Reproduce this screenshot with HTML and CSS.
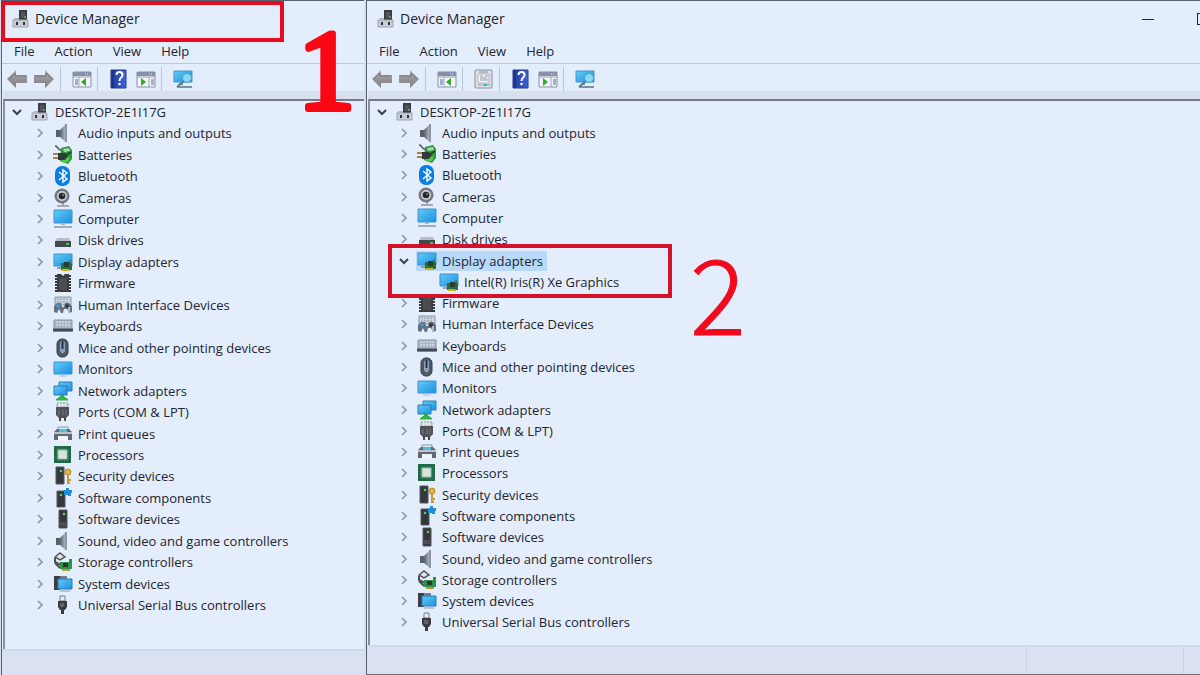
FILE: index.html
```html
<!DOCTYPE html>
<html lang="en">
<head>
<meta charset="utf-8">
<title>Device Manager</title>
<link rel="stylesheet" href="styles.css">
</head>
<body>
<svg class="sprite" aria-hidden="true">
  <defs>
    <linearGradient id="g-screen" x1="0" y1="0" x2="1" y2="1"><stop offset="0" stop-color="#62cbf7"/><stop offset="1" stop-color="#1c90e2"/></linearGradient>
    <linearGradient id="g-arrow" x1="0" y1="0" x2="0" y2="1"><stop offset="0" stop-color="#aaa9ae"/><stop offset="1" stop-color="#7f7e83"/></linearGradient>
    <linearGradient id="g-metal" x1="0" y1="0" x2="1" y2="0"><stop offset="0" stop-color="#59616d"/><stop offset="1" stop-color="#b9c1cc"/></linearGradient>
    <linearGradient id="g-help" x1="0" y1="0" x2="1" y2="0"><stop offset="0" stop-color="#1d3a9c"/><stop offset="1" stop-color="#4263d8"/></linearGradient>
  </defs>
  <symbol id="i-root" viewBox="0 0 20 20"><rect x="8" y="1" width="8" height="10" fill="#3b3d42"/><rect x="10" y="3" width="4" height="6" fill="#53565c"/><rect x="13" y="7" width="2" height="2" fill="#4ea35a"/><path d="M2 11h15v7H2z" fill="#c9cdd6" stroke="#9da3b0"/><path d="M2 11l2-2h4v2z" fill="#b1b5bf"/><path d="M6 13v3M13 13v3" stroke="#2d3036" stroke-width="2"/></symbol>
  <symbol id="i-audio" viewBox="0 0 20 20"><path d="M3 7h4v7H3z" fill="#59616b"/><path d="M7 7l6-6v18l-6-5z" fill="url(#g-metal)"/><path d="M12 1h2v18h-2z" fill="#8c96a4"/></symbol>
  <symbol id="i-battery" viewBox="0 0 20 20"><path d="M2 1c4 0 2 5 7 4" fill="none" stroke="#50565d" stroke-width="1.5"/><path d="M8 3l8-2 3 4v9l-4 5-8-3z" fill="#30963a"/><path d="M10 4l6-1 1 3-6 1z" fill="#a7dcaa"/><path d="M8 14l9-2-2 5-5 1z" fill="#53cc45"/><path d="M5 8h7l3 3-3 4H5z" fill="#34383b"/><path d="M0 9h5M0 13h5" stroke="#a3853b" stroke-width="2"/><path d="M12 11l6-4" stroke="#1b492b" stroke-width="2"/></symbol>
  <symbol id="i-bluetooth" viewBox="0 0 20 20"><rect x="2" y="0" width="15" height="20" rx="7" fill="#087ee4"/><path d="M6 6l8 7-4 3V4l4 3-8 7" fill="none" stroke="#fff" stroke-width="1.4"/></symbol>
  <symbol id="i-camera" viewBox="0 0 20 20"><path d="M4 18h12M10 14v4" stroke="#a3a8b2" stroke-width="2"/><circle cx="9" cy="8" r="7" fill="#777b82" stroke="#6b6f76"/><circle cx="9" cy="8" r="5" fill="#c9ccd3"/><circle cx="9" cy="8" r="3.3" fill="#25272d"/><circle cx="10" cy="7" r="1" fill="#7689a5"/></symbol>
  <symbol id="i-computer" viewBox="0 0 20 20"><path d="M1 1h18v13H1z" fill="url(#g-screen)" stroke="#4294c8"/><path d="M1 18h18" stroke="#a0acbc" stroke-width="2"/><path d="M8 15h4v1H8z" fill="#a8b3c2"/></symbol>
  <symbol id="i-disk" viewBox="0 0 20 20"><path d="M4 8h12l2 4H2z" fill="#b9bcc2"/><path d="M2 11h16v6H2z" fill="#45484c"/><path d="M13 14h3" stroke="#55c55d" stroke-width="2"/></symbol>
  <symbol id="i-display" viewBox="0 0 20 20"><path d="M1 2h18v12H1z" fill="url(#g-screen)" stroke="#3f8fc0"/><path d="M4 16h6" stroke="#8ea0b5" stroke-width="2"/><path d="M8 11h11v7H8z" fill="#1c7739"/><path d="M11 10h5v5h-5z" fill="#283c32"/><path d="M9 18h8" stroke="#d9a91f" stroke-width="2"/><path d="M17 8v10" stroke="#345b32"/></symbol>
  <symbol id="i-firmware" viewBox="0 0 20 20"><path d="M4 1h4l2 2 2-2h4v18H4z" fill="#3a3c40"/><path d="M3 2v17M17 2v17" stroke="#35373b" stroke-width="2" stroke-dasharray="2 1"/><path d="M6 5h8v12H6z" fill="#4b4d51"/></symbol>
  <symbol id="i-hid" viewBox="0 0 20 20"><path d="M2 2h16v8H2z" fill="#c9d2de" stroke="#8c96a6"/><path d="M4 4h12M4 7h12" stroke="#8f9caf" stroke-dasharray="2 1"/><path d="M1 17V11l3-3h4l1 4h2l1-4h4l3 3v6l-3 1-2-4h-3l-1 4H8l-2-4-2 4z" fill="#66717e"/><path d="M5 9v4M3 11h4" stroke="#3a9ee1" stroke-width="1.5"/><circle cx="14" cy="11" r="2" fill="#343a44"/><path d="M16 12v6" stroke="#b0bac7" stroke-width="2"/></symbol>
  <symbol id="i-keyboard" viewBox="0 0 20 20"><path d="M1 4h18v11H1z" fill="#a9b5c4" stroke="#8993a1"/><path d="M3 6h14M3 9h14" stroke="#d3dbe5" stroke-width="1.5" stroke-dasharray="2 1"/><path d="M0 14h20" stroke="#424c59" stroke-width="3"/></symbol>
  <symbol id="i-mouse" viewBox="0 0 20 20"><rect x="4" y="1" width="11" height="18" rx="5" fill="#505965" stroke="#343b45"/><path d="M7 5c1-3 4-3 5 0v8c-1 3-4 3-5 0z" fill="#8ea1b7"/><path d="M9.500 3v8" stroke="#26344a" stroke-width="2"/></symbol>
  <symbol id="i-monitor" viewBox="0 0 20 20"><path d="M1 3h18v12H1z" fill="url(#g-screen)" stroke="#3d94cf"/><path d="M6 17h8" stroke="#b1bccb"/></symbol>
  <symbol id="i-network" viewBox="0 0 20 20"><path d="M6 1h13v9H6z" fill="url(#g-screen)" stroke="#2e80b5"/><path d="M1 5h13v9H1z" fill="url(#g-screen)" stroke="#2b79ae"/><path d="M9 14v3" stroke="#27ae46" stroke-width="4"/><path d="M3 19c3-4 9-4 12 0z" fill="#30ba42" stroke="#35ad43"/></symbol>
  <symbol id="i-port" viewBox="0 0 20 20"><path d="M4 1h11v4H4z" fill="#e0e4eb" stroke="#898e97" stroke-dasharray="2 1"/><path d="M3 5h13v8l-3 3H6l-3-3z" fill="#505258"/><path d="M6 8v5M10 8v5M13 8v5" stroke="#777a82"/><path d="M7 15v4M12 15v4" stroke="#44464b" stroke-width="2"/></symbol>
  <symbol id="i-print" viewBox="0 0 20 20"><path d="M5 3h10v5H5z" fill="#d8eef6" stroke="#8299a9"/><path d="M1 8l3-3h12l3 3v8H1z" fill="#606a74"/><path d="M6 5h8v3H6z" fill="#56bbd3"/><path d="M1 9h18" stroke="#b9c1ca" stroke-width="2"/><path d="M5 12h10v5H5z" fill="#eef5fa"/></symbol>
  <symbol id="i-cpu" viewBox="0 0 20 20"><path d="M1 1h17v17H1z" fill="#26754e"/><path d="M2 2h15v15H2z" fill="none" stroke="#184f34" stroke-dasharray="2 1"/><path d="M5 5h9v9H5z" fill="#d9e4e0" stroke="#9fbcb0"/></symbol>
  <symbol id="i-device" viewBox="0 0 20 20"><path d="M6 1h8v18H6z" fill="#34373c" stroke="#55595f"/><path d="M7 14h6M7 16h6" stroke="#62666c"/><circle cx="11" cy="5" r="1.3" fill="#57cf60"/></symbol>
  <symbol id="i-security" viewBox="0 0 20 20"><path d="M3 1h8v17H3z" fill="#34373c" stroke="#55595f"/><circle cx="8" cy="5" r="1.3" fill="#57cf60"/><circle cx="15" cy="6" r="3" fill="#e3b546" stroke="#b98724"/><path d="M15 9v9M15 14h3M15 17h2" stroke="#c79a37" stroke-width="2"/></symbol>
  <symbol id="i-component" viewBox="0 0 20 20"><path d="M4 3h8v16H4z" fill="#34373c" stroke="#55595f"/><circle cx="8" cy="7" r="1.3" fill="#57cf60"/><path d="M11 2h2V0h3v2h3v3h-1v3h-3v-1h-4z" fill="#218ddd"/></symbol>
  <symbol id="i-storage" viewBox="0 0 20 20"><path d="M2 5l5-4 5 4-5 3z" fill="#e3e6ea" stroke="#52565c" stroke-width="1.5"/><path d="M2 6v4l6 3M2 11l5 5" fill="none" stroke="#4c5057" stroke-width="2"/><path d="M7 10h9V7h3v10H7z" fill="#2c9149"/><path d="M10 11h5v4h-5z" fill="#27362e"/><path d="M9 18h8" stroke="#b79b35" stroke-width="2"/></symbol>
  <symbol id="i-system" viewBox="0 0 20 20"><path d="M1 2h6v14H1z" fill="#394049"/><path d="M7 2h7v3H7z" fill="#727f8e"/><path d="M5 5h14v10H5z" fill="url(#g-screen)" stroke="#2c7db0"/><path d="M7 17h10" stroke="#929ba8"/></symbol>
  <symbol id="i-usb" viewBox="0 0 20 20"><path d="M7 1h5v5H7z" fill="#e7eaf0" stroke="#777b83"/><path d="M5 6h9v6l-2 3H7l-2-3z" fill="#3b3d43"/><path d="M7 8h4v4H7z" fill="#5f6269"/><path d="M9.500 14v5" stroke="#393b40" stroke-width="3"/></symbol>
  <symbol id="i-back" viewBox="0 0 20 20"><path d="M0 10l9-9v5h11v8H9v5z" fill="url(#g-arrow)"/><path d="M2 10l6-6v3h11" fill="none" stroke="#77777d"/></symbol>
  <symbol id="i-forward" viewBox="0 0 20 20"><path d="M20 10l-9-9v5H0v8h11v5z" fill="url(#g-arrow)"/><path d="M18 10l-6-6v3H1" fill="none" stroke="#77777d"/></symbol>
  <symbol id="i-tree" viewBox="0 0 20 20"><path d="M1 3h18v15H1z" fill="#f2f4f8" stroke="#8a93a6"/><path d="M1 3h18v4H1z" fill="#8591aa"/><path d="M13 5h4" stroke="#dce2ed" stroke-dasharray="1 1"/><path d="M1 8h18M7 8v10" stroke="#9da5b5"/><path d="M3 11h3M3 13h3M3 15h3" stroke="#4b6aa4"/><path d="M14 9v8l-5-4z" fill="#35a62f"/></symbol>
  <symbol id="i-pane" viewBox="0 0 20 20"><path d="M1 3h18v15H1z" fill="#f2f4f8" stroke="#8a93a6"/><path d="M1 3h18v4H1z" fill="#8591aa"/><path d="M13 5h4" stroke="#dce2ed" stroke-dasharray="1 1"/><path d="M1 8h18M13 8v10" stroke="#9da5b5"/><path d="M15 11h3M15 13h3M15 15h3" stroke="#4b6aa4"/><path d="M5 9v8l5-4z" fill="#35a62f"/></symbol>
  <symbol id="i-props" viewBox="0 0 20 20"><rect x="1" y="1" width="17" height="18" rx="1" fill="#dfe3e9" stroke="#868d99"/><path d="M4 5h11v9H4z" fill="#f7f8fa" stroke="#a9afba"/><path d="M5 3h9M6 7h3M11 7h3M6 9h7M6 11h8" stroke="#8b929e"/><path d="M4 16h4M13 16h3" stroke="#9199a6"/><path d="M9 16h4" stroke="#38b5ca" stroke-width="2"/></symbol>
  <symbol id="i-help" viewBox="0 0 20 20"><path d="M2 1h15v18H2z" fill="url(#g-help)" stroke="#243b91"/><path d="M4 1v18" stroke="#182b78"/><path d="M7.500 6c0-4 6-4 6 0 0 3-3 2-3 6" fill="none" stroke="#fff" stroke-width="2"/><circle cx="10.500" cy="15" r="1.300" fill="#fff"/></symbol>
  <symbol id="i-scan" viewBox="0 0 20 20"><path d="M1 2h18v11H1z" fill="url(#g-screen)" stroke="#4295c5"/><path d="M4 18h15M6 15h4" stroke="#7793a5" stroke-width="2"/><path d="M11 12l-7 6" stroke="#597e91" stroke-width="2"/><circle cx="14" cy="9" r="4.500" fill="#87d8f5" stroke="#4e9fc5"/></symbol>
  <symbol id="i-right" viewBox="0 0 20 20"><path d="M8 6l4 4-4 4" fill="none" stroke="#93999f" stroke-width="1.700"/></symbol>
  <symbol id="i-down" viewBox="0 0 20 20"><path d="M6 8l4 4 4-4" fill="none" stroke="#3c4048" stroke-width="2"/></symbol>
</svg>

<main class="desktop">
  <section class="window window-first" aria-label="Device Manager, collapsed">
    <header class="titlebar">
      <svg class="app-icon"><use href="#i-root"/></svg><h1 class="title">Device Manager</h1>
      <span class="frame frame-title"></span>
    </header>
    <nav class="menubar"><button>File</button><button>Action</button><button>View</button><button>Help</button></nav>
    <div class="toolbar">
      <button aria-label="Back"><svg><use href="#i-back"/></svg></button><button aria-label="Forward"><svg><use href="#i-forward"/></svg></button><i class="sep"></i>
      <button aria-label="Console tree"><svg><use href="#i-tree"/></svg></button><i class="sep"></i>
      <button aria-label="Help topics"><svg><use href="#i-help"/></svg></button><button aria-label="Action pane"><svg><use href="#i-pane"/></svg></button><i class="sep"></i>
      <button aria-label="Scan for hardware changes"><svg><use href="#i-scan"/></svg></button>
    </div>
    <div class="pane">
      <ul class="tree">
        <li class="root"><button aria-label="Collapse"><svg><use href="#i-down"/></svg></button><span class="node"><svg><use href="#i-root"/></svg>DESKTOP-2E1I17G</span></li>
        <li><button aria-label="Expand"><svg><use href="#i-right"/></svg></button><span class="node"><svg><use href="#i-audio"/></svg>Audio inputs and outputs</span></li>
        <li><button aria-label="Expand"><svg><use href="#i-right"/></svg></button><span class="node"><svg><use href="#i-battery"/></svg>Batteries</span></li>
        <li><button aria-label="Expand"><svg><use href="#i-right"/></svg></button><span class="node"><svg><use href="#i-bluetooth"/></svg>Bluetooth</span></li>
        <li><button aria-label="Expand"><svg><use href="#i-right"/></svg></button><span class="node"><svg><use href="#i-camera"/></svg>Cameras</span></li>
        <li><button aria-label="Expand"><svg><use href="#i-right"/></svg></button><span class="node"><svg><use href="#i-computer"/></svg>Computer</span></li>
        <li><button aria-label="Expand"><svg><use href="#i-right"/></svg></button><span class="node"><svg><use href="#i-disk"/></svg>Disk drives</span></li>
        <li><button aria-label="Expand"><svg><use href="#i-right"/></svg></button><span class="node"><svg><use href="#i-display"/></svg>Display adapters</span></li>
        <li><button aria-label="Expand"><svg><use href="#i-right"/></svg></button><span class="node"><svg><use href="#i-firmware"/></svg>Firmware</span></li>
        <li><button aria-label="Expand"><svg><use href="#i-right"/></svg></button><span class="node"><svg><use href="#i-hid"/></svg>Human Interface Devices</span></li>
        <li><button aria-label="Expand"><svg><use href="#i-right"/></svg></button><span class="node"><svg><use href="#i-keyboard"/></svg>Keyboards</span></li>
        <li><button aria-label="Expand"><svg><use href="#i-right"/></svg></button><span class="node"><svg><use href="#i-mouse"/></svg>Mice and other pointing devices</span></li>
        <li><button aria-label="Expand"><svg><use href="#i-right"/></svg></button><span class="node"><svg><use href="#i-monitor"/></svg>Monitors</span></li>
        <li><button aria-label="Expand"><svg><use href="#i-right"/></svg></button><span class="node"><svg><use href="#i-network"/></svg>Network adapters</span></li>
        <li><button aria-label="Expand"><svg><use href="#i-right"/></svg></button><span class="node"><svg><use href="#i-port"/></svg>Ports (COM &amp; LPT)</span></li>
        <li><button aria-label="Expand"><svg><use href="#i-right"/></svg></button><span class="node"><svg><use href="#i-print"/></svg>Print queues</span></li>
        <li><button aria-label="Expand"><svg><use href="#i-right"/></svg></button><span class="node"><svg><use href="#i-cpu"/></svg>Processors</span></li>
        <li><button aria-label="Expand"><svg><use href="#i-right"/></svg></button><span class="node"><svg><use href="#i-security"/></svg>Security devices</span></li>
        <li><button aria-label="Expand"><svg><use href="#i-right"/></svg></button><span class="node"><svg><use href="#i-component"/></svg>Software components</span></li>
        <li><button aria-label="Expand"><svg><use href="#i-right"/></svg></button><span class="node"><svg><use href="#i-device"/></svg>Software devices</span></li>
        <li><button aria-label="Expand"><svg><use href="#i-right"/></svg></button><span class="node"><svg><use href="#i-audio"/></svg>Sound, video and game controllers</span></li>
        <li><button aria-label="Expand"><svg><use href="#i-right"/></svg></button><span class="node"><svg><use href="#i-storage"/></svg>Storage controllers</span></li>
        <li><button aria-label="Expand"><svg><use href="#i-right"/></svg></button><span class="node"><svg><use href="#i-system"/></svg>System devices</span></li>
        <li><button aria-label="Expand"><svg><use href="#i-right"/></svg></button><span class="node"><svg><use href="#i-usb"/></svg>Universal Serial Bus controllers</span></li>
      </ul>
    </div>
    <footer class="statusbar"></footer>
    <svg class="step step-one" viewBox="0 0 60 100"><text x="0" y="82">1</text></svg>
  </section>

  <section class="window window-second" aria-label="Device Manager, display adapters expanded">
    <header class="titlebar">
      <svg class="app-icon"><use href="#i-root"/></svg><h2 class="title">Device Manager</h2>
      <button class="caption minimize" aria-label="Minimize"></button><button class="caption maximize" aria-label="Maximize"></button>
    </header>
    <nav class="menubar"><button>File</button><button>Action</button><button>View</button><button>Help</button></nav>
    <div class="toolbar">
      <button aria-label="Back"><svg><use href="#i-back"/></svg></button><button aria-label="Forward"><svg><use href="#i-forward"/></svg></button><i class="sep"></i>
      <button aria-label="Console tree"><svg><use href="#i-tree"/></svg></button><i class="sep"></i>
      <button aria-label="Properties"><svg><use href="#i-props"/></svg></button><i class="sep"></i>
      <button aria-label="Help topics"><svg><use href="#i-help"/></svg></button><button aria-label="Action pane"><svg><use href="#i-pane"/></svg></button><i class="sep"></i>
      <button aria-label="Scan for hardware changes"><svg><use href="#i-scan"/></svg></button>
    </div>
    <div class="pane">
      <ul class="tree">
        <li class="root"><button aria-label="Collapse"><svg><use href="#i-down"/></svg></button><span class="node"><svg><use href="#i-root"/></svg>DESKTOP-2E1I17G</span></li>
        <li><button aria-label="Expand"><svg><use href="#i-right"/></svg></button><span class="node"><svg><use href="#i-audio"/></svg>Audio inputs and outputs</span></li>
        <li><button aria-label="Expand"><svg><use href="#i-right"/></svg></button><span class="node"><svg><use href="#i-battery"/></svg>Batteries</span></li>
        <li><button aria-label="Expand"><svg><use href="#i-right"/></svg></button><span class="node"><svg><use href="#i-bluetooth"/></svg>Bluetooth</span></li>
        <li><button aria-label="Expand"><svg><use href="#i-right"/></svg></button><span class="node"><svg><use href="#i-camera"/></svg>Cameras</span></li>
        <li><button aria-label="Expand"><svg><use href="#i-right"/></svg></button><span class="node"><svg><use href="#i-computer"/></svg>Computer</span></li>
        <li><button aria-label="Expand"><svg><use href="#i-right"/></svg></button><span class="node"><svg><use href="#i-disk"/></svg>Disk drives</span></li>
        <li class="marked"><button aria-label="Collapse"><svg><use href="#i-down"/></svg></button><span class="node selected"><svg><use href="#i-display"/></svg>Display adapters</span><span class="frame frame-node"></span><span class="step step-two">2</span></li>
        <li class="leaf"><span class="node"><svg><use href="#i-display"/></svg>Intel(R) Iris(R) Xe Graphics</span></li>
        <li><button aria-label="Expand"><svg><use href="#i-right"/></svg></button><span class="node"><svg><use href="#i-firmware"/></svg>Firmware</span></li>
        <li><button aria-label="Expand"><svg><use href="#i-right"/></svg></button><span class="node"><svg><use href="#i-hid"/></svg>Human Interface Devices</span></li>
        <li><button aria-label="Expand"><svg><use href="#i-right"/></svg></button><span class="node"><svg><use href="#i-keyboard"/></svg>Keyboards</span></li>
        <li><button aria-label="Expand"><svg><use href="#i-right"/></svg></button><span class="node"><svg><use href="#i-mouse"/></svg>Mice and other pointing devices</span></li>
        <li><button aria-label="Expand"><svg><use href="#i-right"/></svg></button><span class="node"><svg><use href="#i-monitor"/></svg>Monitors</span></li>
        <li><button aria-label="Expand"><svg><use href="#i-right"/></svg></button><span class="node"><svg><use href="#i-network"/></svg>Network adapters</span></li>
        <li><button aria-label="Expand"><svg><use href="#i-right"/></svg></button><span class="node"><svg><use href="#i-port"/></svg>Ports (COM &amp; LPT)</span></li>
        <li><button aria-label="Expand"><svg><use href="#i-right"/></svg></button><span class="node"><svg><use href="#i-print"/></svg>Print queues</span></li>
        <li><button aria-label="Expand"><svg><use href="#i-right"/></svg></button><span class="node"><svg><use href="#i-cpu"/></svg>Processors</span></li>
        <li><button aria-label="Expand"><svg><use href="#i-right"/></svg></button><span class="node"><svg><use href="#i-security"/></svg>Security devices</span></li>
        <li><button aria-label="Expand"><svg><use href="#i-right"/></svg></button><span class="node"><svg><use href="#i-component"/></svg>Software components</span></li>
        <li><button aria-label="Expand"><svg><use href="#i-right"/></svg></button><span class="node"><svg><use href="#i-device"/></svg>Software devices</span></li>
        <li><button aria-label="Expand"><svg><use href="#i-right"/></svg></button><span class="node"><svg><use href="#i-audio"/></svg>Sound, video and game controllers</span></li>
        <li><button aria-label="Expand"><svg><use href="#i-right"/></svg></button><span class="node"><svg><use href="#i-storage"/></svg>Storage controllers</span></li>
        <li><button aria-label="Expand"><svg><use href="#i-right"/></svg></button><span class="node"><svg><use href="#i-system"/></svg>System devices</span></li>
        <li><button aria-label="Expand"><svg><use href="#i-right"/></svg></button><span class="node"><svg><use href="#i-usb"/></svg>Universal Serial Bus controllers</span></li>
      </ul>
    </div>
    <footer class="statusbar"><span class="cell"></span><span class="cell"></span></footer>
  </section>
</main>
</body>
</html>
```

FILE: styles.css
```css
* {
  box-sizing: border-box;
}

body {
  margin: 0;
  background: #d5deee;
  color: #22252d;
  font-family: "Open Sans", "Noto Sans", sans-serif;
  font-size: 13px;
  line-height: 20px;
}

button {
  padding: 0;
  border: 0;
  background: none;
  color: inherit;
  font: inherit;
}

svg {
  display: block;
  flex: none;
  width: 20px;
  height: 20px;
}

.sprite {
  position: absolute;
  width: 0;
  height: 0;
}

.desktop {
  display: grid;
  grid-template-columns: 363px 1fr;
  column-gap: 2px;
  min-height: 100vh;
  padding-left: 1px;
  overflow: hidden;
}

.window {
  position: relative;
  display: flex;
  flex-direction: column;
  min-width: 0;
  border-top: 1px solid #596072;
  border-left: 1px solid #596072;
  background: #e4edfc;
}

.window-first {
  --indent: 23px;
  --tree-end: 33px;
}

.window-second {
  --indent: 22px;
  --tree-end: 12px;
  border-bottom: 1px solid #6b7080;
}

.titlebar {
  position: relative;
  display: flex;
  align-items: center;
  gap: 4px;
  height: 38px;
  padding: 0 0 2px 9px;
}

.title {
  margin: 0;
  font-size: 14px;
  font-weight: 400;
}

.caption {
  width: 12px;
  height: 12px;
}

.minimize {
  margin-left: auto;
  background: linear-gradient(#20242c, #20242c) center / 12px 1px no-repeat;
}

.maximize {
  margin: 0 -9px 0 39px;
  border: 1px solid #20242c;
}

.menubar {
  display: flex;
  align-items: center;
  gap: 20px;
  height: 25px;
  padding-left: 12px;
  border-bottom: 1px solid #bdc6d7;
}

.toolbar {
  display: flex;
  align-items: center;
  gap: 7px;
  height: 28px;
  padding: 2px 5px 0;
}

.sep {
  width: 1px;
  height: 24px;
  margin: 0 4px 0 -1px;
  background: #bcc5d5;
}

.sep ~ button + .sep {
  margin-left: -2px;
}

.pane {
  display: flex;
  flex: 1;
  margin: 7px 0 0 1px;
  border-top: 2px solid #747b8a;
  border-left: 2px solid #8990a0;
  box-shadow: 0 -8px #d8e0f0;
}

.tree {
  display: flex;
  flex: 1;
  flex-direction: column;
  margin: 0;
  padding: 0 0 var(--tree-end) 2px;
  list-style: none;
}

.tree li {
  display: flex;
  flex: 1;
  align-items: center;
  gap: 2px;
  padding-left: var(--indent);
  white-space: nowrap;
}

.tree .root {
  padding-left: 0;
}

.tree .leaf {
  padding-left: 66px;
}

.node {
  display: flex;
  align-items: center;
  gap: 5px;
  padding: 0 4px 0 1px;
}

.selected {
  background: #b9d9fa;
}

.marked {
  position: relative;
}

.statusbar {
  display: flex;
  justify-content: flex-end;
  height: 26px;
  border-top: 2px solid #d0d9e9;
  background: #d9e1f2;
}

.window-second .statusbar {
  height: 29px;
}

.cell {
  width: 157px;
  border-left: 1px solid #c9d2e3;
}

.cell + .cell {
  width: 17px;
}

.frame {
  position: absolute;
  border: 4px solid #d3122a;
}

.frame-title {
  top: 0;
  left: -1px;
  width: 283px;
  height: 41px;
  border-color: #ea0a20;
}

.frame-node {
  top: -6px;
  left: 16px;
  width: 284px;
  height: 54px;
}

.step {
  position: absolute;
}

.step-one {
  top: 26px;
  left: 296px;
  width: 60px;
  height: 100px;
  overflow: visible;
  fill: #fb0714;
  stroke: #fb0714;
  stroke-width: 6px;
  stroke-linejoin: round;
  font-family: "Liberation Serif", serif;
  font-size: 114px;
}

.step-two {
  top: -10px;
  left: 318px;
  color: #f20a1c;
  font-family: "Noto Sans CJK JP", sans-serif;
  font-size: 104px;
  font-weight: 300;
  line-height: 100px;
  -webkit-text-stroke: 1px #f20a1c;
}
```
